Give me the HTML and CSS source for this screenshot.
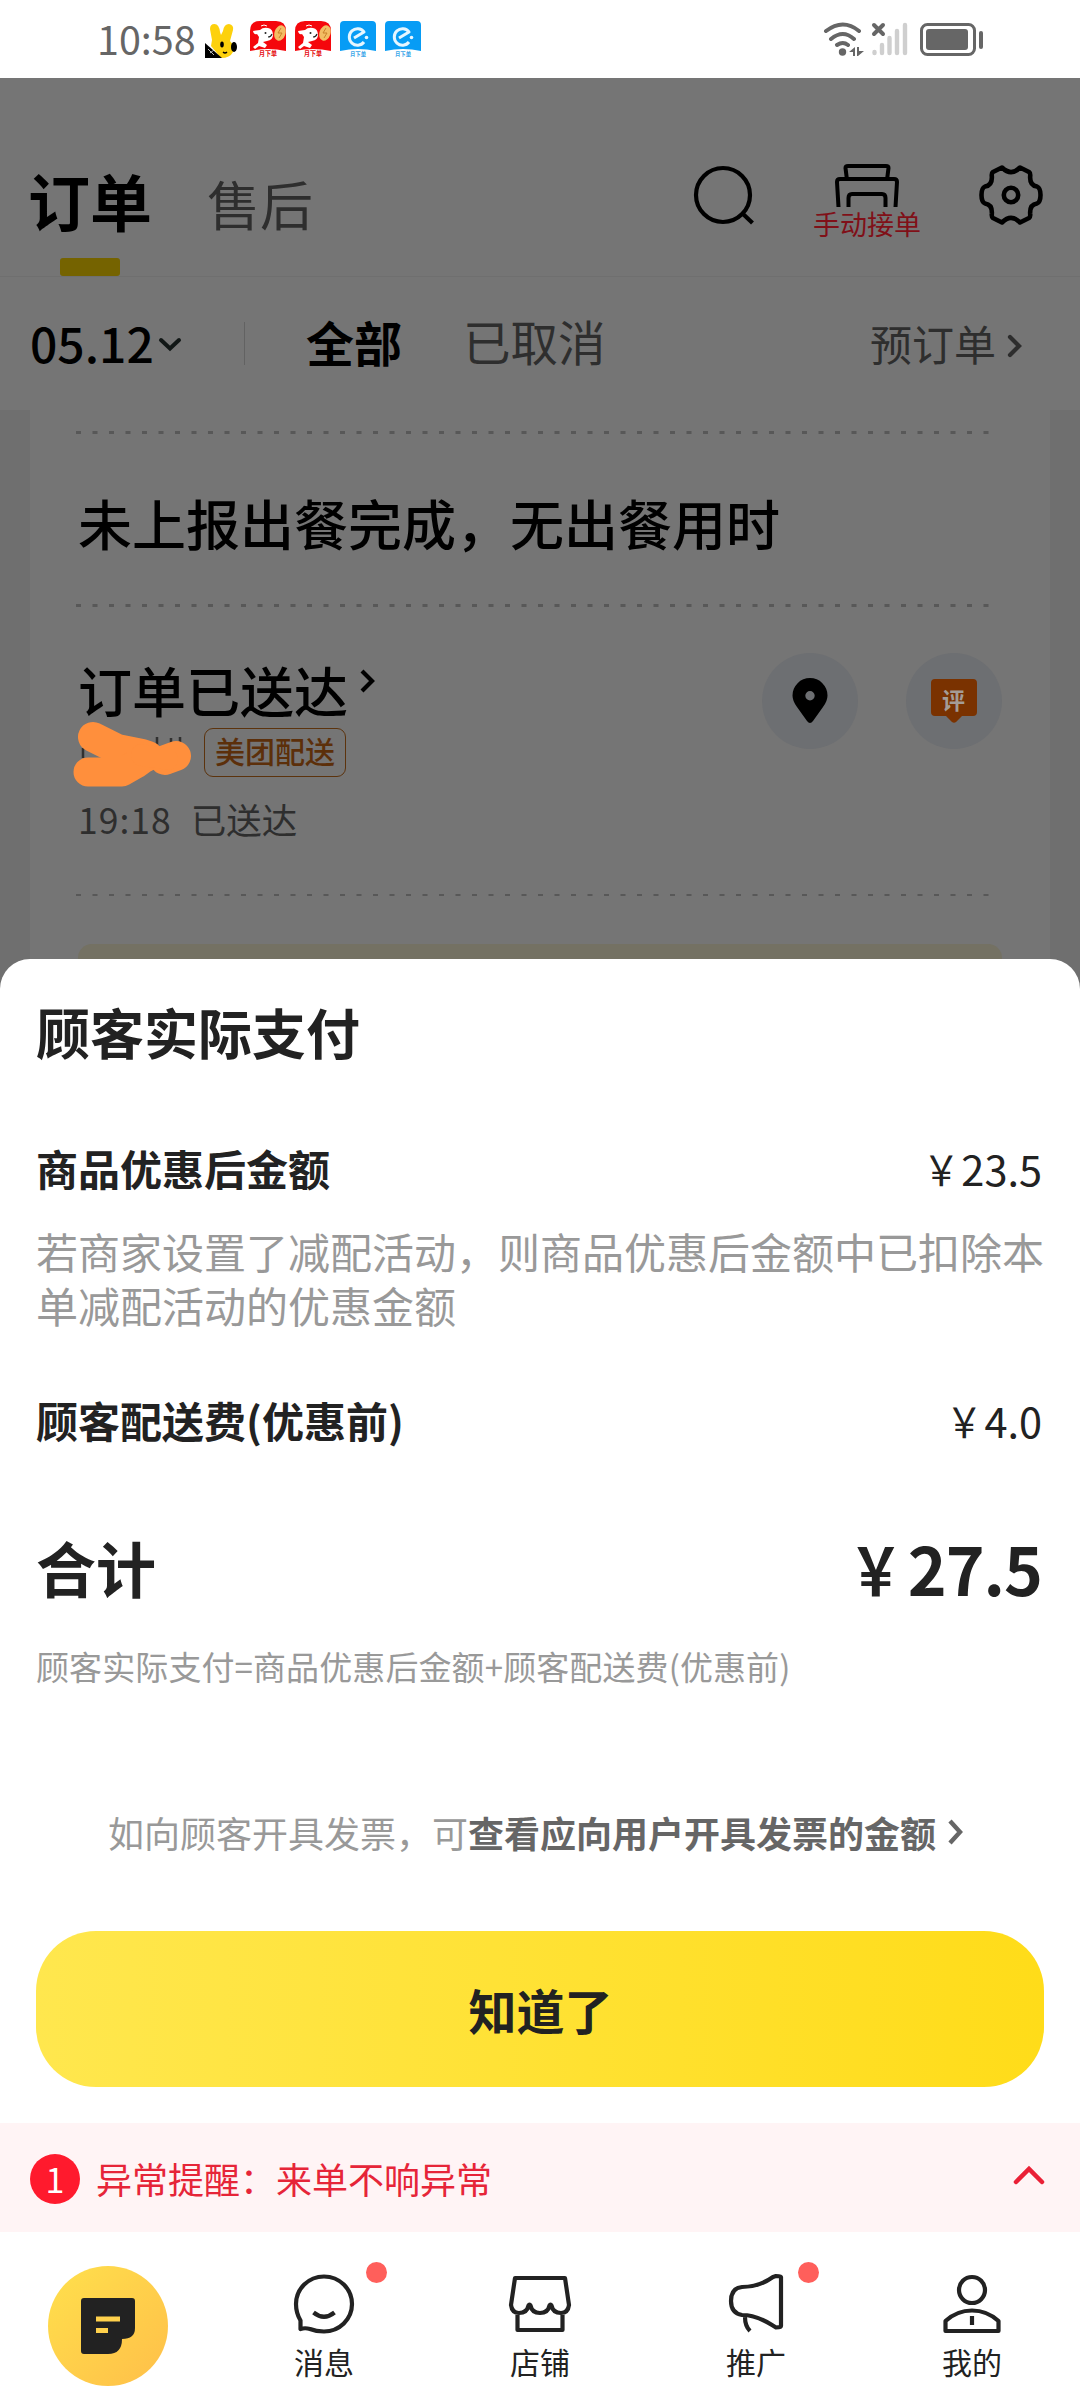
FILE: index.html
```html
<!DOCTYPE html>
<html lang="zh-CN">
<head>
<meta charset="utf-8">
<title>订单</title>
<link rel="stylesheet" href="styles.css">
</head>
<body>
<svg class="defs" width="0" height="0">
  <defs>
    <symbol id="jd" viewBox="0 0 36 36">
      <path d="M0 30V10Q0 0 10 0H26Q36 0 36 10V30Q18 26 0 30Z" fill="#f5070c"/>
      <path d="M3 10l7-1q3-3 8-2 5 1 5 7 0 5-6 6l-4 1 4 3-2 3-6-2-4 3-2-2 5-4 1-6-2-3q-3 1-4-3Z" fill="#fff"/>
      <circle cx="15.500" cy="12" r="1" fill="#222"/><path d="M18 16q3 0 4-3" stroke="#222" stroke-width="1.200" fill="none"/>
      <path d="M11 5q3-2 6 0" stroke="#fff" fill="none"/>
      <ellipse cx="30" cy="12" rx="5.500" ry="8" transform="rotate(18 30 12)" fill="#f3bd63"/>
      <path d="M31 7l-3 5h4l-3 5" stroke="#c9822c" fill="none"/>
      <text x="18" y="35" class="mini" textLength="18" lengthAdjust="spacingAndGlyphs" fill="#e5080c">月下单</text>
    </symbol>
    <symbol id="ele" viewBox="0 0 36 36">
      <path d="M0 30V4Q0 0 4 0H32Q36 0 36 4V30Q18 26 0 30Z" fill="#079cf5"/>
      <path d="M14 17l10-6A8.200 8.200 0 1 0 24 21" stroke="#e6f6ff" stroke-width="3" fill="none" stroke-linejoin="round"/>
      <circle cx="26.500" cy="16.500" r="1.800" fill="#e6f6ff"/>
      <text x="18" y="35.500" class="mini" textLength="16" lengthAdjust="spacingAndGlyphs" fill="#3aa5e8">月下单</text>
    </symbol>
  </defs>
</svg>

<header class="status">
  <span class="clock">10:58</span>
  <svg class="bunny" width="32" height="34" viewBox="0 0 32 34">
    <path d="M5 5Q5 0 9.500 0 14 0 15 8l1 3 2-4Q19 0 24 0q5 1 4 6l-3 11q5 5 3 11-3 6-12 6L6 22 7 16Z" fill="#fdd10d"/>
    <path d="M0 19L17 34H0Z" fill="#000"/>
    <ellipse cx="29" cy="23" rx="3" ry="5" fill="#000"/><ellipse cx="17" cy="20.500" rx="1.800" ry="3" fill="#000"/>
    <path d="M18 28q2 2 4 0" stroke="#000" stroke-width="1.300" fill="none"/><path d="M3 25l6 6M5 29l4-3" stroke="#bbb"/>
  </svg>
  <svg class="app" width="36" height="36"><use href="#jd"/></svg>
  <svg class="app" width="36" height="36"><use href="#jd"/></svg>
  <svg class="app" width="36" height="36"><use href="#ele"/></svg>
  <svg class="app" width="36" height="36"><use href="#ele"/></svg>
  <svg class="signals" width="162" height="36" viewBox="0 0 162 36">
    <g fill="none" stroke="#666" stroke-linecap="round" stroke-width="4">
      <path d="M3 10Q20-3 36 10M8 18Q20 8 31 18M14 24Q20 20 25 24"/>
      <path d="M51 4l9 9M60 4l-9 9"/>
    </g>
    <circle cx="19.500" cy="31" r="3.700" fill="#666"/>
    <path d="M26 31l6-5v9h-2v-4ZM34 26h2v4h5l-6 5h-1Z" fill="#666"/>
    <path d="M51.500 31v1M59 24v8M66.500 17v15M74 10v22M82 4v28" stroke="#cfcfcf" stroke-width="4.400" stroke-linecap="round"/>
    <rect x="98.500" y="3.500" width="53" height="30" rx="6" fill="none" stroke="#666" stroke-width="3"/>
    <rect x="103" y="8" width="42" height="21" rx="3" fill="#666"/>
    <path d="M158 12v14" stroke="#666" stroke-width="4" stroke-linecap="round"/>
  </svg>
</header>

<main class="page">
  <div class="tabs">
    <div class="tab-active">订单</div>
    <div class="tab">售后</div>
    <svg class="search" width="62" height="64" viewBox="0 0 62 64" fill="none" stroke="#000" stroke-width="4.200">
      <circle cx="30" cy="32" r="27"/><path d="M49 50l10.500 10"/>
    </svg>
    <div class="printer">
      <svg width="66" height="44" viewBox="0 0 66 44" fill="none" stroke="#000" stroke-width="4" stroke-linejoin="round">
        <path d="M13 17L11.500 5Q11.500 3 14 3H52Q54.500 3 54.500 5L53 17M4.500 44L3 19Q3 16 6 16H60Q63 16 63 19L61.500 44M14.500 44V35Q14.500 31 18 31H48Q51.500 31 51.500 35V44"/>
      </svg>
      <span>手动接单</span>
    </div>
    <svg class="gear" width="66" height="64" viewBox="-33 -32 66 64" fill="none" stroke="#000" stroke-width="4.600" stroke-linejoin="round">
      <path d="M-9-27.500Q0-18.500 9-27.500L18-23Q19.500-22 19.200-19 18.500-9.500 26-8.500 29.500-7 29.500 0 29.500 7 26 8.500 18.500 9.500 19.200 19 19.500 22 18 23L9 27.500Q0 18.500-9 27.500L-18 23Q-19.500 22-19.200 19-18.500 9.500-26 8.500-29.500 7-29.500 0-29.500-7-26-8.500-18.500-9.500-19.200-19-19.500-22-18-23Z"/>
      <circle r="7.200"/>
    </svg>
  </div>
  <div class="filters">
    <span class="date">05.12</span>
    <svg class="date-arrow" width="24" height="16" viewBox="0 0 24 16"><path d="M3 3l9 8.500L21 3" fill="none" stroke="#111716" stroke-width="4" stroke-linecap="round"/></svg>
    <i class="divider"></i>
    <span class="filter-active">全部</span>
    <span class="filter">已取消</span>
    <span class="preorder">预订单</span>
    <svg width="16" height="26" viewBox="0 0 16 26"><path d="M3 4l9 9-9 9" fill="none" stroke="#2d2d2d" stroke-width="4.200" stroke-linecap="round"/></svg>
  </div>
  <section class="card">
    <svg class="dots dots-first" width="914" height="3"><path d="M0 1.500H914" stroke="#585858" stroke-width="3" stroke-dasharray="5 11.500"/></svg>
    <h2 class="meal">未上报出餐完成，无出餐用时</h2>
    <svg class="dots" width="914" height="3"><path d="M0 1.500H914" stroke="#585858" stroke-width="3" stroke-dasharray="5 11.500"/></svg>
    <div class="delivery">
      <div class="info">
        <h2>订单已送达<svg width="18" height="28" viewBox="0 0 18 28"><path d="M3 4l10 10L3 24" fill="none" stroke="#000" stroke-width="4.200"/></svg></h2>
        <div class="rider">
          <svg width="122" height="68" viewBox="0 0 122 68">
            <path d="M11 27v10M37 19h12M85 16v10M99 17v8M108 16v10" stroke="#303030" stroke-width="2.500"/>
            <g stroke="#ff8f3c" stroke-linecap="round" stroke-linejoin="round" fill="#ff8f3c">
              <path d="M21 16L45 28L70 33L76 35" stroke-width="30"/>
              <path d="M16 51H50L64 43L75 35" stroke-width="29"/>
              <path d="M93 39L104 35" stroke-width="30"/>
              <path d="M70 34L95 38" stroke-width="22"/>
            </g>
          </svg>
          <span class="tag">美团配送</span>
        </div>
        <p class="sent"><span class="sent-time">19:18</span><span>已送达</span></p>
      </div>
      <div class="round"><svg width="38" height="48" viewBox="0 0 38 48"><path d="M19 1A17.500 17.500 0 0 0 1.500 18.500Q1.500 24 6 30L16 44Q19 48 22 44L32 30Q36.500 24 36.500 18.500A17.500 17.500 0 0 0 19 1ZM19 14a4.700 4.700 0 1 1 0 9.400 4.700 4.700 0 1 1 0-9.400Z"/></svg></div>
      <div class="round review"><svg width="48" height="46" viewBox="0 0 48 46"><path d="M5 1H43Q47 1 47 5V34Q47 38 43 38H32L26 44Q24 45.500 22 44L16 38H5Q1 38 1 34V5Q1 1 5 1Z" fill="#7a3200"/></svg><b>评</b></div>
    </div>
    <svg class="dots" width="914" height="2"><path d="M0 1H914" stroke="#585858" stroke-width="2" stroke-dasharray="5 11.500"/></svg>
    <div class="notice"></div>
  </section>
</main>

<section class="sheet">
  <h1>顾客实际支付</h1>
  <div class="row row-goods"><b>商品优惠后金额</b><span><i class="yen">￥</i>23.5</span></div>
  <p class="note">若商家设置了减配活动，则商品优惠后金额中已扣除本单减配活动的优惠金额</p>
  <div class="row row-fee"><b>顾客配送费(优惠前)</b><span><i class="yen">￥</i>4.0</span></div>
  <div class="row total"><b>合计</b><span><i class="yen">￥</i>27.5</span></div>
  <p class="formula">顾客实际支付=商品优惠后金额+顾客配送费(优惠前)</p>
  <p class="invoice">如向顾客开具发票，可<b>查看应向用户开具发票的金额</b><svg width="36" height="30" viewBox="0 0 36 30"><path d="M14 4l10 11-10 11" fill="none" stroke="#666" stroke-width="4.400"/></svg></p>
  <button class="ok">知道了</button>
</section>

<div class="alert">
  <span class="count">1</span><span class="alert-text">异常提醒：来单不响异常</span>
  <svg width="32" height="22" viewBox="0 0 32 22"><path d="M3 18L16 5l13 13" fill="none" stroke="#ea2036" stroke-width="4.500" stroke-linecap="round"/></svg>
</div>

<nav class="nav">
  <a class="home"><svg width="54" height="56" viewBox="0 0 54 56"><path d="M3 0H51Q54 0 54 3V30Q54 41 41 41 41 56 27 56H3Q0 56 0 53V3Q0 0 3 0Z" fill="#222"/><path d="M15 18.500H39V23.500H15ZM15 30H27V35H15Z" fill="#ffd14c"/></svg></a>
  <a><i class="dot"></i>
    <svg width="64" height="64" viewBox="0 0 64 64" fill="none" stroke="#222" stroke-width="4.200"><path d="M8.500 57V48.500Q4 41 4 32A28 27.500 0 1 1 32 59.500Q24 59.500 18 57 13 55.500 8.500 57Z" stroke-linejoin="round"/><path d="M21.500 40.500Q32 49 42.500 40.500"/></svg>
    <span>消息</span></a>
  <a>
    <svg width="64" height="64" viewBox="0 0 64 64" fill="none" stroke="#222" stroke-width="4.200" stroke-linejoin="round"><path d="M7 6H57L61 33Q60 41 53 41 45 41 43.500 33.500 42.500 31.500 41.500 33.500 40 41 32 41 24 41 22.500 33.500 21.500 31.500 20.500 33.500 19 41 11 41 4 41 3 33ZM9.500 41V58H54.500V41"/></svg>
    <span>店铺</span></a>
  <a><i class="dot"></i>
    <svg width="64" height="64" viewBox="0 0 64 64" fill="none" stroke="#222" stroke-width="4.200" stroke-linejoin="round"><path d="M18 15Q35 15 49 5L52 4Q57 4 57 5V54Q57 55.500 52 55.500L48 53Q32 43 18 43 7 41 7 29 7 16 18 15ZM21 45Q21 54 26 59"/></svg>
    <span>推广</span></a>
  <a>
    <svg width="64" height="64" viewBox="0 0 64 64" fill="none" stroke="#222" stroke-width="4.200" stroke-linejoin="round"><circle cx="32" cy="18" r="13"/><path d="M5.500 59V49Q17 38.500 32 38.500 47 38.500 58.500 49V59ZM32 44v9"/></svg>
    <span>我的</span></a>
</nav>
</body>
</html>
```

FILE: styles.css
```css
* { box-sizing: border-box; margin: 0; padding: 0; }
body {
  width: 1080px;
  height: 2400px;
  overflow: hidden;
  background: #fff;
  color: #222;
  font-family: "Noto Sans CJK SC", sans-serif;
}
svg { display: block; flex: none; }
.defs { position: absolute; }
.mini { font-size: 7px; font-weight: 700; text-anchor: middle; }

/* status bar */
.status { display: flex; height: 78px; align-items: flex-start; padding-left: 97px; }
.clock { width: 108px; font-size: 39.500px; line-height: 60px; margin-top: 8px; color: #666; }
.bunny { margin: 24px 13px 0 0; }
.app { margin: 21px 9px 0 0; }
.signals { margin: 21px 0 0 393px; }

/* dimmed order page */
.page { height: 911px; background: #757575; color: #000; overflow: hidden; }
.tabs { display: flex; height: 199px; border-bottom: 1px solid #6f6f6f; align-items: flex-start; }
.tab-active {
  width: 120px; margin-left: 30px; padding-top: 82px; height: 198px;
  display: flex; flex-direction: column; justify-content: space-between; align-items: center;
  font-size: 62px; font-weight: 700; line-height: 80px; white-space: nowrap;
}
.tab-active::after { content: ""; width: 60px; height: 18px; border-radius: 3px; background: #756300; }
.tab { margin: 85px 0 0 57px; width: 108px; font-size: 53px; line-height: 80px; color: #2e2e2e; }
.search { margin: 85px 0 0 378px; }
.printer { width: 108px; margin: 85px 0 0 58px; display: flex; flex-direction: column; align-items: center; }
.printer span { font-size: 27px; line-height: 36px; margin-top: -1px; color: #801018; }
.gear { margin: 85px 0 0 57px; }
.filters { display: flex; height: 133px; align-items: center; padding-left: 30px; color: #2e2e2e; }
.filters span { line-height: 70px; margin-bottom: 6px; }
.date { width: 128px; font-size: 48px; font-weight: 500; color: #000; }
.filters .date { margin-bottom: 3px; }
.date-arrow { margin-top: 2px; }
.divider { width: 1px; height: 43px; margin-left: 62px; background: #626262; }
.filter-active { margin-left: 61px; font-size: 48px; font-weight: 700; color: #000; }
.filter { margin-left: 61px; font-size: 47.500px; }
.preorder { margin: 4px 11px 0 auto; font-size: 42px; }
.filters > svg:last-child { margin-right: 57px; margin-top: 4px; }

.card {
  height: 579px; border: solid #6f6f6f; border-width: 0 30px;
  padding: 0 48px 0 46px; display: flex; flex-direction: column;
}
.dots-first { margin-top: 21px; }
.meal { flex: none; height: 170px; padding: 50px 0 0 2px; font-size: 54px; font-weight: 500; line-height: 78px; }
.delivery { flex: none; height: 287px; display: flex; padding: 46px 0 0 2px; }
.info { width: 684px; margin-top: -2px; }
.info h2 { display: flex; font-size: 54px; font-weight: 500; line-height: 78px; }
.info h2 svg { margin: 16px 0 0 11px; }
.rider { display: flex; margin: -8px 0 0 -6px; height: 68px; }
.tag {
  width: 142px; height: 49px; margin: 7px 0 0 10px;
  border: 1.500px solid #5c330d; border-radius: 9px;
  color: #5c2f0a; font-size: 30px; font-weight: 500; line-height: 43px; text-align: center;
}
.sent { display: flex; gap: 19px; margin-top: 6px; font-size: 35.500px; line-height: 48px; color: #2e2e2e; }
.sent-time { letter-spacing: 1px; }
.round {
  width: 96px; height: 96px; border-radius: 50%; background: #6d6f72;
  display: flex; align-items: center; justify-content: center; position: relative;
}
.review { margin-left: 48px; }
.review b { position: absolute; left: 36px; top: 31px; font-size: 23px; line-height: 30px; color: #a49c96; }
.notice { height: 60px; margin: 48px 0 0 2px; border-radius: 14px 14px 0 0; background: #747163; flex: none; }

/* bottom sheet */
.sheet {
  position: relative; height: 1164px; margin-top: -30px;
  background: #fff; padding: 0 36px; border-radius: 30px 30px 0 0;
}
h1 { padding-top: 33px; font-size: 54px; line-height: 80px; font-weight: 700; }
.row { display: flex; justify-content: space-between; font-size: 42px; line-height: 60px; padding-right: 2px; }
.row-goods { margin-top: 66px; }
.row > span { font-size: 41.500px; }
.yen { display: inline-block; font-style: normal; transform: scaleX(.88); transform-origin: right; margin-right: 2px; }
.note { font-size: 42px; line-height: 54px; margin-top: 26px; color: #999; }
.row-fee { margin-top: 58px; }
.total { margin-top: 77px; font-size: 60px; line-height: 80px; }
.total > span { font-size: 66px; font-weight: 700; letter-spacing: -1px; }
.total .yen { transform: scaleX(.82); margin-right: 6px; }
.formula { margin-top: 37px; font-size: 33px; line-height: 44px; letter-spacing: .1px; color: #999; }
.invoice { display: flex; justify-content: center; align-items: center; margin-top: 118px; font-size: 36px; line-height: 52px; color: #999; }
.invoice b { color: #666; }
.ok {
  display: block; width: 100%; height: 156px; margin-top: 73px; padding-left: 1px;
  border: 0; border-radius: 60px; background: linear-gradient(90deg, #ffe74e, #ffdc19);
  color: #222; font: 700 48px "Noto Sans CJK SC", sans-serif;
}

/* warning strip */
.alert { display: flex; height: 109px; align-items: center; padding: 3px 35px 0 30px; background: #fff4f5; color: #e62538; font-size: 36px; }
.count { width: 50px; height: 50px; margin-right: 16px; border-radius: 50%; background: #ff1a2d; color: #fff; line-height: 49px; text-align: center; font-size: 34px; }
.alert-text { line-height: 52px; margin-top: -3px; }
.alert svg { margin: -8px 0 0 auto; }

/* bottom navigation */
.nav { display: grid; grid-template-columns: repeat(5, 216px); height: 168px; }
.nav a { position: relative; display: flex; flex-direction: column; align-items: center; padding-top: 40px; }
.nav a span { font-size: 30px; line-height: 40px; margin-top: 5px; }
.nav .home {
  width: 120px; height: 120px; margin: 34px 0 0 48px; padding: 0; justify-content: center;
  border-radius: 50%; background: linear-gradient(135deg, #ffe04c, #ffbf49);
}
.dot { position: absolute; left: 150px; top: 30px; width: 21px; height: 21px; border-radius: 50%; background: #ff5f5b; }
```
